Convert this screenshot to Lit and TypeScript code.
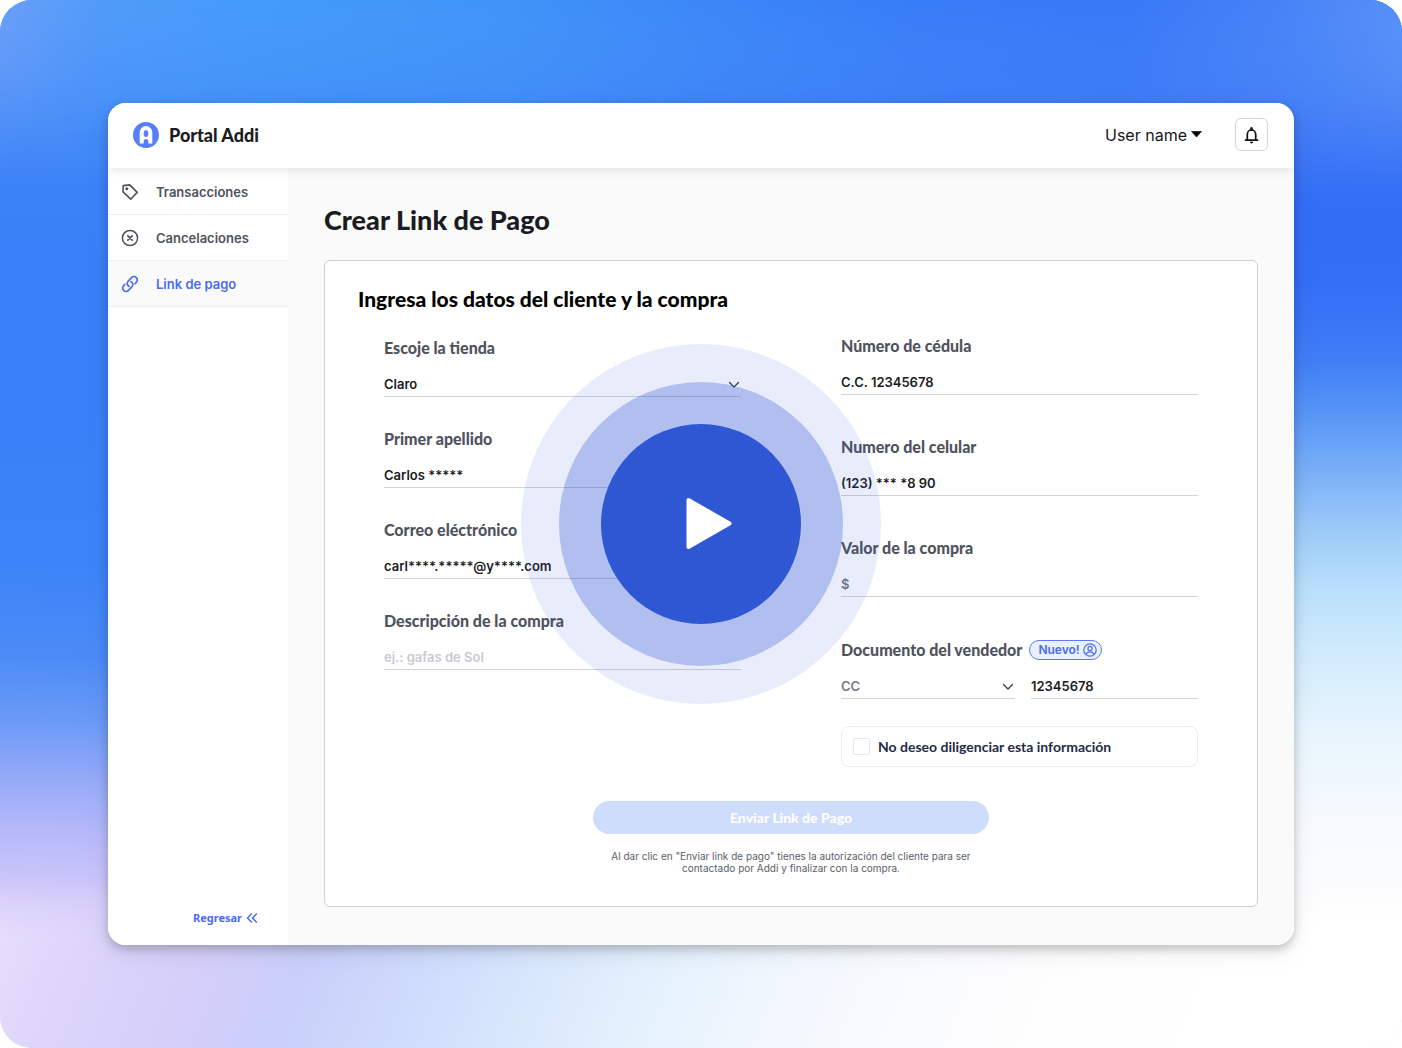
import { LitElement, html, css, svg, nothing } from "lit";
import { customElement, property } from "lit/decorators.js";

const chevron = svg`<svg class="chevron" viewBox="0 0 12 8" width="12" height="8" aria-hidden="true">
  <path d="M1.5 1.5 6 6l4.5-4.5" fill="none" stroke="currentColor" stroke-width="1.3" stroke-linecap="round" stroke-linejoin="round"/>
</svg>`;

const tagIcon = svg`<svg viewBox="0 0 18 18" width="18" height="18" aria-hidden="true">
  <path d="M2.2 2.6 8.7 1.9 16.2 9.4 9.7 16.2 2 8.8Z" fill="none" stroke="currentColor" stroke-width="1.6" stroke-linejoin="round"/>
  <circle cx="5.8" cy="5.8" r="1.5" fill="currentColor"/>
</svg>`;

const cancelIcon = svg`<svg viewBox="0 0 18 18" width="18" height="18" aria-hidden="true">
  <circle cx="9" cy="9" r="7.6" fill="none" stroke="currentColor" stroke-width="1.5"/>
  <path d="m6.8 6.8 4.4 4.4m0-4.4-4.4 4.4" stroke="currentColor" stroke-width="1.7" stroke-linecap="round"/>
</svg>`;

const linkIcon = svg`<svg viewBox="0 0 24 24" width="18" height="18" aria-hidden="true">
  <path d="M13.19 8.688a4.5 4.5 0 0 1 1.242 7.244l-4.5 4.5a4.5 4.5 0 0 1-6.364-6.364l1.757-1.757m13.35-.622 1.757-1.757a4.5 4.5 0 0 0-6.364-6.364l-4.5 4.5a4.5 4.5 0 0 0 1.242 7.244"
    fill="none" stroke="currentColor" stroke-width="2.2" stroke-linecap="round" stroke-linejoin="round"/>
</svg>`;

@customElement("addi-nav-item")
class AddiNavItem extends LitElement {
  @property() label = "";
  @property({ attribute: false }) icon: unknown = nothing;
  @property({ type: Boolean }) current = false;

  static styles = css`
    :host { display: block; }
    .item {
      display: flex; align-items: center; gap: 17px; height: 45px; padding: 0 13px;
      border-bottom: 1px solid #efeff1; color: #4f525c; text-decoration: none;
      font: 600 13px/20px Inter, sans-serif;
    }
    .current { background: #fafafa; color: #4a6cf0; }
    svg { display: block; }
  `;

  render() {
    return html`<a class="item ${this.current ? "current" : ""}" href="#" aria-current=${this.current ? "page" : nothing}>
      ${this.icon}<span>${this.label}</span>
    </a>`;
  }
}

@customElement("play-button")
class PlayButton extends LitElement {
  static styles = css`
    :host { display: block; }
    .ring { display: grid; place-items: center; border-radius: 50%; }
    .outer { width: 360px; height: 360px; background: rgba(47, 84, 220, 0.105); }
    .middle { width: 284px; height: 284px; background: rgba(47, 87, 212, 0.3); }
    .play {
      width: 200px; height: 200px; padding: 0; border: 0; background: #2f57d4; cursor: pointer;
    }
  `;

  render() {
    return html`<div class="ring outer"><div class="ring middle">
      <button class="ring play" type="button" aria-label="Reproducir">
        <svg viewBox="0 0 200 200" width="200" height="200" aria-hidden="true">
          <path d="M87.5 76 128.5 99.5 87.5 123Z" fill="#fff" stroke="#fff" stroke-width="4" stroke-linejoin="round"/>
        </svg>
      </button>
    </div></div>`;
  }
}

@customElement("app-root")
class AppRoot extends LitElement {
  static styles = css`
    :host { display: block; background: #fff; }
    * { box-sizing: border-box; }

    .scene {
      position: relative; display: flex; min-height: 100vh; padding: 103px 108px;
      border-radius: 32px; overflow: hidden; isolation: isolate; font-family: Inter, sans-serif;
    }
    .backdrop { position: absolute; inset: 0; z-index: -1; }
    .layer { position: absolute; inset: 0; }
    .layer-left {
      background: linear-gradient(182deg, #5c9ff9 0%, #458af8 10%, #3d84f8 17%, #3980f8 27%, #3980f8 42%, #3c84f8 56%,
        #4b8bf7 64%, #6a9af7 70%, #93a9f8 75%, #b5b9fa 80%, #d2c9fa 86%, #ded6fb 92%, #e4e0fc 98%, #e2e3fd 100%);
    }
    .layer-right {
      background: linear-gradient(180deg, #5797f8 0%, #4b88f8 6%, #3f78f6 12%, #336df6 20%, #346ef7 27%, #3f7cf6 34%,
        #5593f7 39%, #79b0f8 45%, #9fccf9 51%, #b8dffb 56%, #d0ebfc 62%, #e8f5fd 70%, #f6fafe 78%, #fcfcfe 86%, #fefffe 92%);
      -webkit-mask-image: linear-gradient(90deg, transparent 30%, #000 88%);
      mask-image: linear-gradient(90deg, transparent 30%, #000 88%);
    }
    .layer-top {
      bottom: 82%;
      background: linear-gradient(90deg, #6a9ef8 0%, #509bf9 7%, #449bf9 18%, #4094f8 35%, #3b87f8 50%, #377cf7 65%,
        #3877f6 80%, #4580f7 90%, #5790f7 100%);
      -webkit-mask-image: linear-gradient(#000 0%, rgba(0, 0, 0, 0.7) 40%, transparent 100%);
      mask-image: linear-gradient(#000 0%, rgba(0, 0, 0, 0.7) 40%, transparent 100%);
    }
    .layer-bottom {
      top: 84%;
      background: linear-gradient(112deg, #e6e0fb 0%, #ddd5fb 7%, #d6cffa 15%, #c9cffa 23%, #cfdbfc 31%, #d9e7fc 39%,
        #e4f1fd 47%, #f1f7fe 56%, #fafbfe 66%, #fefefe 76%, #fff 86%);
      -webkit-mask-image: linear-gradient(transparent 0%, #000 36%);
      mask-image: linear-gradient(transparent 0%, #000 36%);
    }

    .window {
      flex: 1; display: flex; flex-direction: column; overflow: hidden; border-radius: 18px; background: #fff;
    }
    .shadow {
      flex: 1; display: flex; border-radius: 18px;
      box-shadow: 0 4px 10px rgba(0, 0, 0, 0.2), 0 8px 24px rgba(0, 0, 0, 0.08);
    }
    .topbar {
      position: relative; display: flex; align-items: center; height: 65px; padding: 0 26px 2px 25px;
      box-shadow: 0 1px 10px rgba(0, 0, 0, 0.12); background: #fff;
    }
    .brand {
      display: flex; align-items: center; gap: 10px; margin-right: auto; color: #1b1c22;
      font: 900 18px/24px Lato, sans-serif;
    }
    .user {
      display: flex; align-items: center; gap: 4px; padding: 0; border: 0; background: none; color: #16171b;
      font: 400 16px/24px Inter, sans-serif; cursor: pointer;
    }
    .bell {
      display: grid; place-items: center; width: 33px; height: 33px; margin-left: 33px; padding: 0;
      border: 1px solid #d4d5d9; border-radius: 6px; background: #fff; color: #111;
    }
    .body { flex: 1; display: flex; }
    .sidebar { display: flex; flex-direction: column; width: 180px; background: #fff; }
    .nav { padding-top: 1px; }
    .back {
      display: flex; align-items: center; justify-content: flex-end; gap: 4px; margin-top: auto; padding: 0 30px 18px 0;
      color: #4a6cf0; text-decoration: none; font: 700 11px/18px "Noto Sans", sans-serif;
    }
    .main { flex: 1; display: flex; flex-direction: column; padding: 34px 36px 38px; background: #fafafa; }
    .title { margin: 0 0 22px; color: #1b1c22; font: 900 27px/36px Lato, sans-serif; }
    .panel {
      flex: 1; display: flex; flex-direction: column; padding: 24px 59px 32px;
      border: 1px solid #cfd0d3; border-radius: 6px; background: #fff;
    }
    .subtitle { margin: 0 -26px 23px; color: #000; font: 900 21px/28px Lato, sans-serif; }
    .columns { display: grid; grid-template-columns: 1fr 1fr; gap: 100px; }
    .column { display: flex; flex-direction: column; gap: 42px; min-width: 0; }
    .column-left { gap: 32px; padding-top: 2px; }
    .field { display: grid; gap: 14px; min-width: 0; }
    .label { color: #50535d; font: 900 16px/20px Lato, sans-serif; }
    .label-row { display: flex; align-items: flex-end; gap: 7px; min-height: 21px; }
    .control {
      width: 100%; min-width: 0; height: 25px; padding: 0; border: 0; border-bottom: 1px solid #d3d4d7; border-radius: 0;
      background: none; color: #1b1c22; font: 600 13px/24px Inter, sans-serif; appearance: none; outline: none;
    }
    .control::placeholder { color: #c9cbd0; opacity: 1; }
    .muted, .muted::placeholder { color: #767982; }
    .picker { display: grid; align-items: center; color: #3a3d46; }
    .picker > * { grid-area: 1 / 1; }
    .chevron { justify-self: end; margin-right: 1px; pointer-events: none; }
    .pair { display: grid; grid-template-columns: 174fr 167fr; gap: 16px; }
    .badge {
      display: flex; align-items: center; gap: 3px; height: 20px; padding: 0 4px 0 8px; border: 1px solid #5b7cf5;
      border-radius: 10px; background: #eaf1fe; color: #4a6cf0; font: 600 12px/18px Inter, sans-serif;
    }
    .seller { display: grid; gap: 27px; }
    .optout {
      display: flex; align-items: center; gap: 8px; height: 41px; padding: 0 11px; border: 1px solid #ececef;
      border-radius: 8px; color: #252a45; font: 700 14px/20px Lato, sans-serif;
    }
    .box {
      width: 17px; height: 17px; margin: 0; border: 1px solid #e6e7ea; border-radius: 2px; background: #fff; appearance: none;
    }
    .actions { display: flex; flex-direction: column; align-items: center; gap: 16px; margin-top: 34px; }
    .send {
      width: 396px; max-width: 100%; height: 33px; padding: 0; border: 0; border-radius: 17px; background: #cfddfc;
      color: #fff; font: 900 14px/20px Lato, sans-serif;
    }
    .note { max-width: 376px; margin: 0; color: #5b5e68; text-align: center; font: 400 10px/12px Inter, sans-serif; }
    .overlay { position: absolute; top: 50%; left: 50%; transform: translate(-50%, -50%); }
  `;

  private textField(id: string, label: string, value: string, placeholder = "", muted = false) {
    return html`<div class="field">
      <label class="label" for=${id}>${label}</label>
      <input class="control ${muted ? "muted" : ""}" id=${id} type="text" .value=${value} placeholder=${placeholder} />
    </div>`;
  }

  render() {
    return html`
      <div class="scene">
        <div class="backdrop" aria-hidden="true">
          <div class="layer layer-left"></div>
          <div class="layer layer-right"></div>
          <div class="layer layer-top"></div>
          <div class="layer layer-bottom"></div>
        </div>
        <div class="shadow"><div class="window">
          <header class="topbar">
            <div class="brand">
              <svg viewBox="0 0 26 26" width="26" height="26" aria-hidden="true">
                <circle cx="13" cy="13" r="13" fill="#5a7ef8"/>
                <path d="M6.7 21.6V10.4a6.3 6.3 0 0 1 12.6 0v11.2h-4v-2.4a2.3 2.3 0 0 0-4.6 0v2.4z" fill="#fff"/>
                <path d="M10.7 12.8v-2.2a2.3 2.3 0 0 1 4.6 0v2.2a2.3 2.3 0 0 1-4.6 0z" fill="#5a7ef8"/>
              </svg>
              <span>Portal Addi</span>
            </div>
            <button class="user" type="button">
              User name
              <svg viewBox="0 0 11 7" width="11" height="7" aria-hidden="true"><path d="M.5.5h10L5.5 6z" fill="#000" stroke="#000" stroke-width=".6" stroke-linejoin="round"/></svg>
            </button>
            <button class="bell" type="button" aria-label="Notificaciones">
              <svg viewBox="0 0 15 18" width="15" height="18" aria-hidden="true">
                <path d="M1.5 14.2h12M3.3 14V8.2a4.2 4.2 0 0 1 8.4 0V14" fill="none" stroke="currentColor" stroke-width="1.7" stroke-linecap="round"/>
                <path d="M7.5 2.2v1.5" stroke="currentColor" stroke-width="2.4" stroke-linecap="round"/>
                <path d="M5.9 15.8h3.2a1.6 1.6 0 0 1-3.2 0z" fill="currentColor"/>
              </svg>
            </button>
          </header>
          <div class="body">
            <aside class="sidebar">
              <nav class="nav">
                <addi-nav-item label="Transacciones" .icon=${tagIcon}></addi-nav-item>
                <addi-nav-item label="Cancelaciones" .icon=${cancelIcon}></addi-nav-item>
                <addi-nav-item label="Link de pago" .icon=${linkIcon} current></addi-nav-item>
              </nav>
              <a class="back" href="#">
                Regresar
                <svg viewBox="0 0 12 12" width="12" height="12" aria-hidden="true">
                  <path d="M5.8 1.5 1.5 6l4.3 4.5M10.8 1.5 6.5 6l4.3 4.5" fill="none" stroke="currentColor" stroke-width="1.5"/>
                </svg>
              </a>
            </aside>
            <main class="main">
              <h1 class="title">Crear Link de Pago</h1>
              <form class="panel" @submit=${(e: Event) => e.preventDefault()}>
                <h2 class="subtitle">Ingresa los datos del cliente y la compra</h2>
                <div class="columns">
                  <div class="column column-left">
                    <div class="field">
                      <label class="label" for="tienda">Escoje la tienda</label>
                      <div class="picker">
                        <select class="control" id="tienda"><option>Claro</option></select>
                        ${chevron}
                      </div>
                    </div>
                    ${this.textField("apellido", "Primer apellido", "Carlos *****")}
                    ${this.textField("correo", "Correo eléctrónico", "carl****.*****@y****.com")}
                    ${this.textField("descripcion", "Descripción de la compra", "", "ej.: gafas de Sol")}
                  </div>
                  <div class="column">
                    ${this.textField("cedula", "Número de cédula", "C.C. 12345678")}
                    ${this.textField("celular", "Numero del celular", "(123) *** *8 90")}
                    ${this.textField("valor", "Valor de la compra", "", "$", true)}
                    <div class="seller">
                      <div class="field">
                        <div class="label-row">
                          <label class="label" for="documento">Documento del vendedor</label>
                          <span class="badge">
                            Nuevo!
                            <svg viewBox="0 0 14 14" width="14" height="14" aria-hidden="true">
                              <g fill="none" stroke="currentColor" stroke-width="1.2">
                                <circle cx="7" cy="7" r="6.2"/>
                                <circle cx="7" cy="5.4" r="2.1"/>
                                <path d="M3 11.5c.6-2 2.2-2.7 4-2.7s3.4.7 4 2.7"/>
                              </g>
                            </svg>
                          </span>
                        </div>
                        <div class="pair">
                          <div class="picker">
                            <select class="control muted" aria-label="Tipo de documento"><option>CC</option></select>
                            ${chevron}
                          </div>
                          <input class="control" id="documento" type="text" .value=${"12345678"} />
                        </div>
                      </div>
                      <label class="optout">
                        <input class="box" type="checkbox" />
                        No deseo diligenciar esta información
                      </label>
                    </div>
                  </div>
                </div>
                <div class="actions">
                  <button class="send" type="submit">Enviar Link de Pago</button>
                  <p class="note">Al dar clic en "Enviar link de pago" tienes la autorización del cliente para ser contactado por Addi y finalizar con la compra.</p>
                </div>
              </form>
            </main>
          </div>
        </div></div>
        <play-button class="overlay"></play-button>
      </div>
    `;
  }
}
